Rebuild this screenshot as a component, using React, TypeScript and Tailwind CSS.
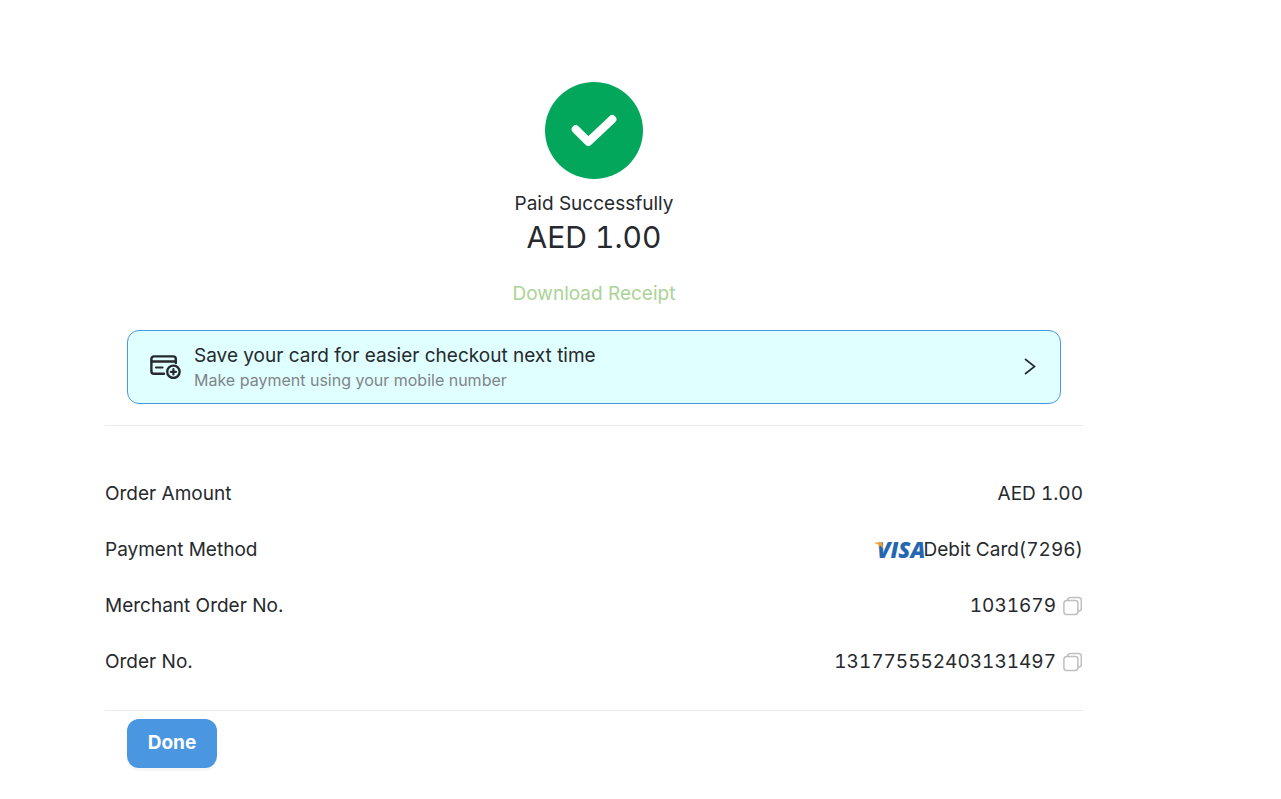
import type { ReactNode } from "react";

function SuccessIcon() {
  return (
    <svg className="h-[98px] w-[98px]" viewBox="0 0 98 98" fill="none" role="img" aria-label="Success">
      <ellipse cx="49" cy="48.5" rx="49" ry="48.5" fill="#03a75c" />
      <path d="M30.8 47.3 43.4 59.8 67.3 37.2" stroke="#fff" strokeWidth="8.2" strokeLinecap="round" strokeLinejoin="round" />
    </svg>
  );
}

function CardPlusIcon() {
  return (
    <svg className="h-6 w-8 shrink-0" viewBox="0 0 32 24" fill="none" stroke="#26292d" strokeLinecap="round" aria-hidden="true">
      <path d="M14 18.8H4A2.6 2.6 0 0 1 1.4 16.2V4A2.6 2.6 0 0 1 4 1.4H23.2A2.6 2.6 0 0 1 25.8 4V8" strokeWidth="2.4" />
      <path d="M1.5 6.5H25.8" strokeWidth="2.3" />
      <path d="M6 12.5H12.5" strokeWidth="2.2" />
      <circle cx="23.4" cy="16.8" r="6.2" strokeWidth="2.4" />
      <path d="M20.8 16.8H26M23.4 14.2V19.4" strokeWidth="2.2" />
    </svg>
  );
}

function ChevronIcon() {
  return (
    <svg className="h-5 w-3 shrink-0" viewBox="0 0 12 20" fill="none" stroke="#26292d" strokeWidth="1.6" aria-hidden="true">
      <path d="M1 2 10.6 9.5 1 17" />
    </svg>
  );
}

function VisaLogo() {
  return (
    <svg className="h-5 w-[50px] overflow-visible" viewBox="0 0 50 20" role="img" aria-label="Visa">
      <defs>
        <linearGradient id="visa" gradientUnits="userSpaceOnUse" x1="2" y1="2" x2="8" y2="7">
          <stop offset="0.55" stopColor="#eda037" />
          <stop offset="0.75" stopColor="#2566b0" />
        </linearGradient>
      </defs>
      <text x="3" y="18" fill="url(#visa)" className="font-['Open_Sans',sans-serif] text-[22px] font-extrabold italic">
        VISA
      </text>
      <path d="M1 2.4H6.6Q8 2.4 8.3 3.8L9.3 9Q6.4 4.6 1 3.2Z" fill="#eda037" />
    </svg>
  );
}

function CopyButton({ label }: { label: string }) {
  return (
    <button type="button" aria-label={label} className="cursor-pointer">
      <svg className="h-5 w-5" viewBox="0 0 20 20" fill="none" stroke="#bfbfc1" strokeWidth="1.5" aria-hidden="true">
        <rect x="0.9" y="4.6" width="14" height="14" rx="2.8" />
        <path d="M4.6 4.5C4.6 2.6 5.7 1.5 7.5 1.5H15.5A2.8 2.8 0 0 1 18.3 4.3V12.2C18.3 14 17 15.2 15 15.2" />
      </svg>
    </button>
  );
}

function Row({ label, children }: { label: string; children: ReactNode }) {
  return (
    <div className="flex h-14 items-center justify-between">
      <dt>{label}</dt>
      <dd className="flex items-center tabular-nums">{children}</dd>
    </div>
  );
}

export default function App() {
  return (
    <main className="mr-[198px] ml-[105px] bg-white pt-[82px] pb-7 font-['Inter',sans-serif] text-[19px] leading-6 text-[#26292d]">
      <section className="flex flex-col items-center">
        <SuccessIcon />
        <h1 className="mt-3">Paid Successfully</h1>
        <p className="mt-[3px] text-[30px] leading-9 tabular-nums">AED 1.00</p>
        <a href="#receipt" className="mt-[27px] text-[#abd396]">Download Receipt</a>
      </section>

      <button
        type="button"
        className="mx-[22px] mt-6 flex h-[74px] w-[calc(100%-44px)] cursor-pointer items-center rounded-xl border border-[#4a97e3] bg-[#e0ffff] pr-6 pl-[22px] text-left"
      >
        <CardPlusIcon />
        <span className="ml-3 flex flex-1 flex-col pt-0.5">
          <span className="leading-6">Save your card for easier checkout next time</span>
          <span className="text-base leading-6 text-[#808489]">Make payment using your mobile number</span>
        </span>
        <ChevronIcon />
      </button>

      <dl className="mt-[21px] border-y border-[#ececec] pt-10 pb-5">
        <Row label="Order Amount">AED 1.00</Row>
        <Row label="Payment Method">
          <VisaLogo />
          Debit Card(7296)
        </Row>
        <Row label="Merchant Order No.">
          <span className="mr-[7px]">1031679</span>
          <CopyButton label="Copy merchant order number" />
        </Row>
        <Row label="Order No.">
          <span className="mr-[7px]">131775552403131497</span>
          <CopyButton label="Copy order number" />
        </Row>
      </dl>

      <button
        type="button"
        className="mt-2 ml-[22px] h-[49px] w-[90px] cursor-pointer rounded-xl bg-[#4a96e1] pb-0.5 font-bold text-white shadow-[0_3px_0_#f6f6f6]"
      >
        Done
      </button>
    </main>
  );
}
